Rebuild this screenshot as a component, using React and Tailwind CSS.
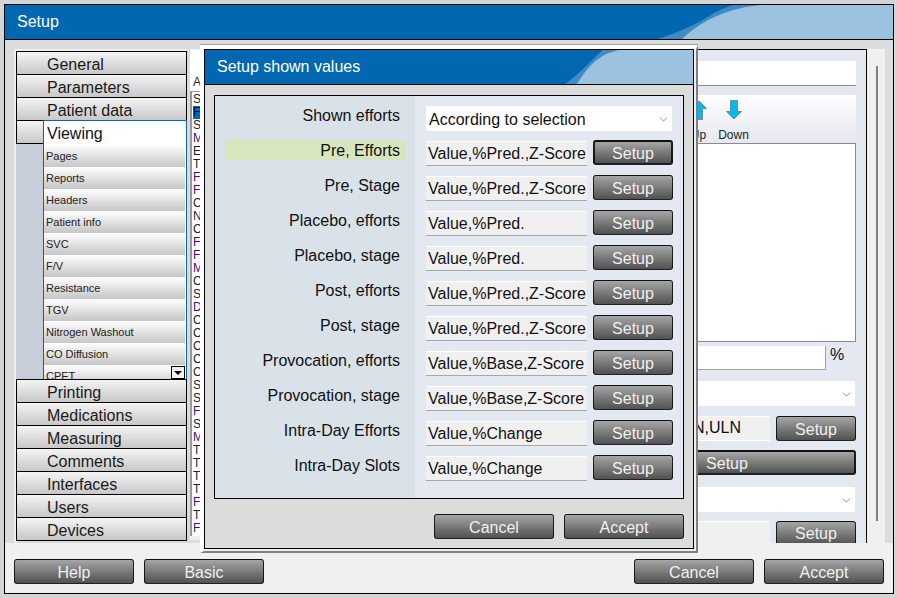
import React from 'react'
import { ChevronDown } from 'lucide-react'

const topTabs = ['General', 'Parameters', 'Patient data']
const bottomTabs = ['Printing', 'Medications', 'Measuring', 'Comments', 'Interfaces', 'Users', 'Devices']
const viewingItems = ['Pages', 'Reports', 'Headers', 'Patient info', 'SVC', 'F/V', 'Resistance', 'TGV', 'Nitrogen Washout', 'CO Diffusion', 'CPET']
const listLetters = 'SFSMETFFCNCFFMCSDCCCCCSSFSMTTTTFTF'.split('')

const rows = [
  ['Pre, Efforts', 'Value,%Pred.,Z-Score'],
  ['Pre, Stage', 'Value,%Pred.,Z-Score'],
  ['Placebo, efforts', 'Value,%Pred.'],
  ['Placebo, stage', 'Value,%Pred.'],
  ['Post, efforts', 'Value,%Pred.,Z-Score'],
  ['Post, stage', 'Value,%Pred.,Z-Score'],
  ['Provocation, efforts', 'Value,%Base,Z-Score'],
  ['Provocation, stage', 'Value,%Base,Z-Score'],
  ['Intra-Day Efforts', 'Value,%Change'],
  ['Intra-Day Slots', 'Value,%Change'],
]

const Btn = ({ children, thick, className = '' }) => (
  <button
    className={`shrink-0 rounded-[3px] border-black/80 bg-linear-to-b from-[#a6a6a6] to-[#525252] pt-[2px] text-[16px] leading-none text-[#f0f0f0] ${thick ? 'border-2' : 'border'} ${className}`}
  >
    {children}
  </button>
)

const Tab = ({ label, last }) => (
  <div className={`flex items-center border-x border-t border-black bg-linear-to-b from-[#f4f4f4] to-[#c8c8c8] pl-[30px] pt-[4px] text-[16px] text-[#1a1a1a] ${last ? 'h-[24px] border-b' : 'h-[23px]'}`}>
    {label}
  </div>
)

const Select = ({ children, className = '' }) => (
  <div className={`flex items-center justify-between rounded-[2px] border border-[#e8e8e8] bg-white pl-[3px] pr-[2px] pt-[2px] text-[16px] text-[#111] ${className}`}>
    <span>{children}</span>
    <ChevronDown className="h-[13px] w-[13px] text-[#555]" strokeWidth={1.2} />
  </div>
)

const Wave = ({ box, mid, light }) => (
  <svg className="absolute inset-0 h-full w-full" preserveAspectRatio="none" viewBox={box}>
    <path d={mid} fill="#3d8cc6" />
    <path d={light} fill="#9bc2de" />
  </svg>
)

const Arrow = ({ up }) => (
  <svg width="16" height="20" viewBox="0 0 16 20" className={up ? 'rotate-180' : ''}>
    <path d="M4.5 0.5h7v11h4l-7.5 7.5l-7.5-7.5h4z" fill="#00b9ee" stroke="#6f8a99" />
  </svg>
)

export default function App() {
  return (
    <div className="h-[598px] w-[897px] overflow-hidden bg-[#d4d4d4] pl-[4px] pt-[4px] font-['Liberation_Sans',sans-serif]">
      <div className="relative flex h-[590px] w-[890px] flex-col border border-black bg-[#f0f0f0]">
        <div className="relative h-[35px] shrink-0 border-b border-black bg-[#0067b0]">
          <Wave
            box="0 0 888 34"
            mid="M728 0C712 5 700 14 698 15C685 22 668 29 653 34L888 34L888 0Z"
            light="M755 0C728 3 700 12 677 34L888 34L888 0Z"
          />
          <div className="relative pl-[12px] text-[16px] leading-[33px] text-white">Setup</div>
        </div>

        <div className="flex h-[503px] shrink-0 overflow-hidden bg-[#dcdcdc] pl-[9px] pt-[9px]">
          <div className="h-[494px] w-[173px] shrink-0 border-l-2 border-t-2 border-[#efefef]">
            {topTabs.map((t) => (
              <Tab key={t} label={t} />
            ))}
            <div className="flex h-[24px]">
              <div className="w-[27px] border-y border-l border-black bg-linear-to-b from-[#f4f4f4] to-[#c8c8c8]" />
              <div className="flex-1 border-x border-t border-[#0067b0] bg-white pl-[3px] text-[16px] leading-[25px] text-[#111]">Viewing</div>
            </div>
            <div className="relative flex h-[235px]">
              <div className="w-[27px] bg-[#c7cdd9]" />
              <div className="flex-1 overflow-hidden border-x border-[#0067b0] bg-white pr-[1px] pt-[1px]">
                {viewingItems.map((item) => (
                  <div key={item} className="flex h-[22px] items-center bg-linear-to-b from-white to-[#c6c6c6] pl-[2px] text-[11px] text-[#222]">
                    {item}
                  </div>
                ))}
              </div>
              <div className="absolute bottom-0 right-[2px] flex h-[13px] w-[14px] items-center justify-center border border-black bg-[#f0f0f0]">
                <div className="h-0 w-0 border-x-[4px] border-t-[4px] border-x-transparent border-t-black" />
              </div>
            </div>
            {bottomTabs.map((t, i) => (
              <Tab key={t} label={t} last={i === bottomTabs.length - 1} />
            ))}
          </div>

          <div className="ml-[3px] h-[491px] w-[15px] shrink-0 bg-[#efefef] pt-[1px]">
            <div className="flex h-[486px] flex-col">
              <div className="h-[41px] shrink-0 bg-white pl-[3px] pt-[25px] text-[12px] leading-[14px] text-[#222]">A</div>
              <div className="flex-1 border-l-2 border-t border-[#999] bg-white pt-[1px] text-[12px] leading-[13px]">
                {listLetters.map((l, i) => (
                  <div key={i} className={`ml-[1px] ${i === 1 ? 'bg-[#0067b0] text-[#001a40]' : 'FMD'.includes(l) ? 'text-[#4b0a70]' : 'text-[#222]'}`}>
                    {l}
                  </div>
                ))}
              </div>
            </div>
          </div>

          <div className="h-[494px] flex-1 overflow-hidden border-r border-t border-black bg-[#e4e9f1] pl-[393px] pr-[10px] pt-[11px]">
            <div className="h-[25px] border-b border-[#8a8a8a] bg-white" />
            <div className="mt-[9px] flex h-[48px] bg-linear-to-b from-white to-[#e6e6f0] pl-[83px] pt-[5px]">
              {['Up', 'Down'].map((label) => (
                <div key={label} className="flex w-[35px] flex-col items-center">
                  <Arrow up={label === 'Up'} />
                  <span className="mt-[8px] text-[12px] leading-[14px] text-[#222]">{label}</span>
                </div>
              ))}
            </div>
            <div className="h-[199px] border border-[#8a8a8a] bg-white" />
            <div className="mt-[4px] flex h-[24px]">
              <div className="w-[228px] border-b border-r border-[#a0a0a0] bg-white" />
              <span className="ml-[4px] text-[16px] leading-[18px] text-[#111]">%</span>
            </div>
            <Select className="mt-[10px] h-[27px]">&nbsp;</Select>
            <div className="mt-[9px] flex h-[24px] justify-between">
              <div className="h-[25px] w-[172px] border-b border-t border-white bg-[#f0f0f0] pl-[33px] text-[16px] leading-[22px] text-[#111]">Value,LLN,ULN</div>
              <Btn className="h-[25px] w-[80px]">Setup</Btn>
            </div>
            <Btn thick className="mt-[10px] h-[25px] w-full">Setup</Btn>
            <Select className="mt-[10px] h-[27px]">&nbsp;</Select>
            <div className="mt-[8px] flex justify-between">
              <div className="h-[25px] w-[172px] border-t border-white bg-[#f0f0f0]" />
              <Btn className="h-[25px] w-[80px]">Setup</Btn>
            </div>
          </div>

          <div className="h-[494px] w-[18px] shrink-0 bg-[#f0f0f0] pl-[9px] pt-[17px]">
            <div className="h-[455px] w-[2px] bg-[#808080]" />
          </div>
          <div className="w-[8px] shrink-0" />
        </div>

        <div className="flex flex-1 justify-between px-[9px] pt-[16px]">
          <div className="flex gap-[10px]">
            <Btn className="h-[25px] w-[120px]">Help</Btn>
            <Btn className="h-[25px] w-[120px]">Basic</Btn>
          </div>
          <div className="flex gap-[10px]">
            <Btn className="h-[25px] w-[120px]">Cancel</Btn>
            <Btn className="h-[25px] w-[120px]">Accept</Btn>
          </div>
        </div>

        <div className="absolute left-[195px] top-[40px] h-[508px] w-[498px] border-b-2 border-l-4 border-r-2 border-t-4 border-b-[#808080] border-l-white border-r-[#808080] border-t-white bg-[#efefef] pb-[2px] pr-[2px] shadow-[0_-1px_0_#a0a0a0]">
          <div className="flex h-[500px] w-[490px] flex-col border border-black bg-[#dcdcdc]">
            <div className="relative h-[35px] shrink-0 border-b border-black bg-[#0067b0]">
              <Wave
                box="0 0 488 34"
                mid="M398 0C388 8 375 24 360 34L488 34L488 0Z"
                light="M415 0C398 3 386 11 372 34L488 34L488 0Z"
              />
              <div className="relative pl-[12px] text-[16px] leading-[33px] text-white">Setup shown values</div>
            </div>

            <div className="ml-[9px] mt-[10px] flex h-[404px] w-[470px] shrink-0 border border-black">
              <div className="flex w-[200px] flex-col gap-[15px] bg-[#d9e1e9] pl-[10px] pt-[9px]">
                <div className="h-[20px] w-[180px] pr-[5px] text-right text-[16px] leading-[22px] text-[#111]">Shown efforts</div>
                {rows.map(([label], i) => (
                  <div key={label} className={`h-[20px] w-[180px] pr-[5px] text-right text-[16px] leading-[22px] text-[#111] ${i === 0 ? 'bg-[#d8e6bd]' : ''}`}>
                    {label}
                  </div>
                ))}
              </div>
              <div className="flex flex-1 flex-col gap-[10px] bg-[#e4e9f1] pl-[10px] pt-[9px]">
                <Select className="-mb-[2px] h-[27px] w-[248px]">According to selection</Select>
                {rows.map(([label, value], i) => (
                  <div key={label} className="flex h-[25px] w-[248px] items-start justify-between pl-[1px]">
                    <div className="mt-[1px] h-[25px] w-[161px] whitespace-nowrap border-b border-t border-b-[#a8a8a8] border-t-white bg-[#f0f0f0] pl-[2px] text-[16px] leading-[23px] text-[#111]">
                      {value}
                    </div>
                    <Btn thick={i === 0} className="h-[25px] w-[80px]">Setup</Btn>
                  </div>
                ))}
              </div>
            </div>

            <div className="mt-[15px] flex justify-end gap-[10px] pr-[9px]">
              <Btn className="h-[25px] w-[120px]">Cancel</Btn>
              <Btn className="h-[25px] w-[120px]">Accept</Btn>
            </div>
          </div>
        </div>
      </div>
    </div>
  )
}
